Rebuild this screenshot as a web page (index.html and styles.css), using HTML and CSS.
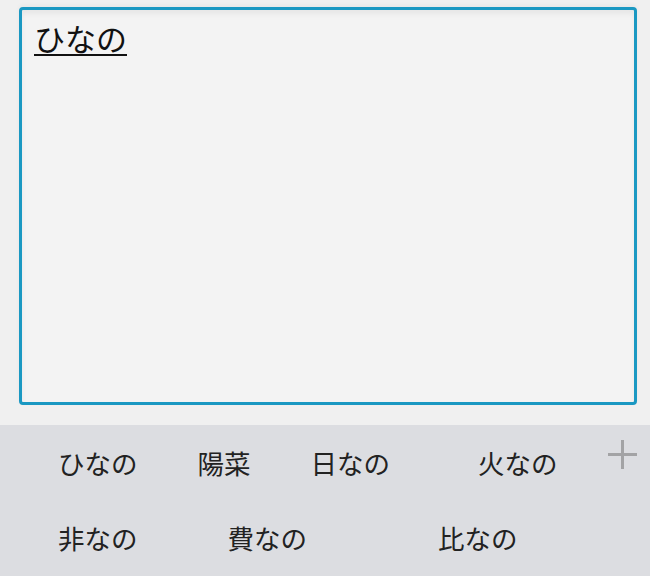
FILE: index.html
```html
<!DOCTYPE html>
<html lang="ja">
<head>
<meta charset="utf-8">
<link rel="stylesheet" href="styles.css">
</head>
<body>
<div class="editor-area">
  <div class="textbox"><span class="composing">ひなの</span></div>
</div>
<div class="candidates">
  <div class="row">
    <span class="cand">ひなの</span>
    <span class="cand g62">陽菜</span>
    <span class="cand g63">日なの</span>
    <span class="cand g91">火なの</span>
    <span class="plus" aria-label="more"></span>
  </div>
  <div class="row">
    <span class="cand">非なの</span>
    <span class="cand g92">費なの</span>
    <span class="cand g133">比なの</span>
  </div>
</div>
</body>
</html>
```
FILE: styles.css
```css
html, body {
  margin: 0;
  padding: 0;
}
body {
  width: 650px;
  height: 576px;
  overflow: hidden;
  background: #f0f0f0;
  font-family: "Noto Sans CJK JP", "Noto Sans", sans-serif;
}
.editor-area {
  padding: 7px 13px 20px 19px;
  height: 398px;
}
.textbox {
  box-sizing: border-box;
  height: 398px;
  border: 3px solid #1a98c2;
  border-radius: 4px;
  background: #f3f3f3;
  box-shadow: inset 0 4px 5px rgba(0, 0, 0, 0.05), 0 -2px 4px rgba(0, 0, 0, 0.04);
  padding: 8px 12px;
}
.composing {
  font-size: 31px;
  line-height: 40px;
  color: #111;
  text-decoration: underline;
  text-decoration-thickness: 2px;
  text-underline-offset: 3px;
}
.candidates {
  background: #dcdde1;
  height: 151px;
}
.row {
  display: flex;
  align-items: center;
  height: 75px;
  padding-left: 58px;
  position: relative;
}
.cand {
  font-size: 26.5px;
  color: #222;
  line-height: 30px;
}
.g62 { margin-left: 60px; }
.g63 { margin-left: 60px; }
.g91 { margin-left: 88px; }
.g92 { margin-left: 90px; }
.g133 { margin-left: 131px; }
.plus {
  position: absolute;
  left: 608px;
  top: 15px;
  width: 29px;
  height: 29px;
}
.plus::before, .plus::after {
  content: "";
  position: absolute;
  background: #a3a3a5;
}
.plus::before {
  left: 0;
  right: 0;
  top: 13px;
  height: 3px;
}
.plus::after {
  top: 0;
  bottom: 0;
  left: 13px;
  width: 3px;
}
```
